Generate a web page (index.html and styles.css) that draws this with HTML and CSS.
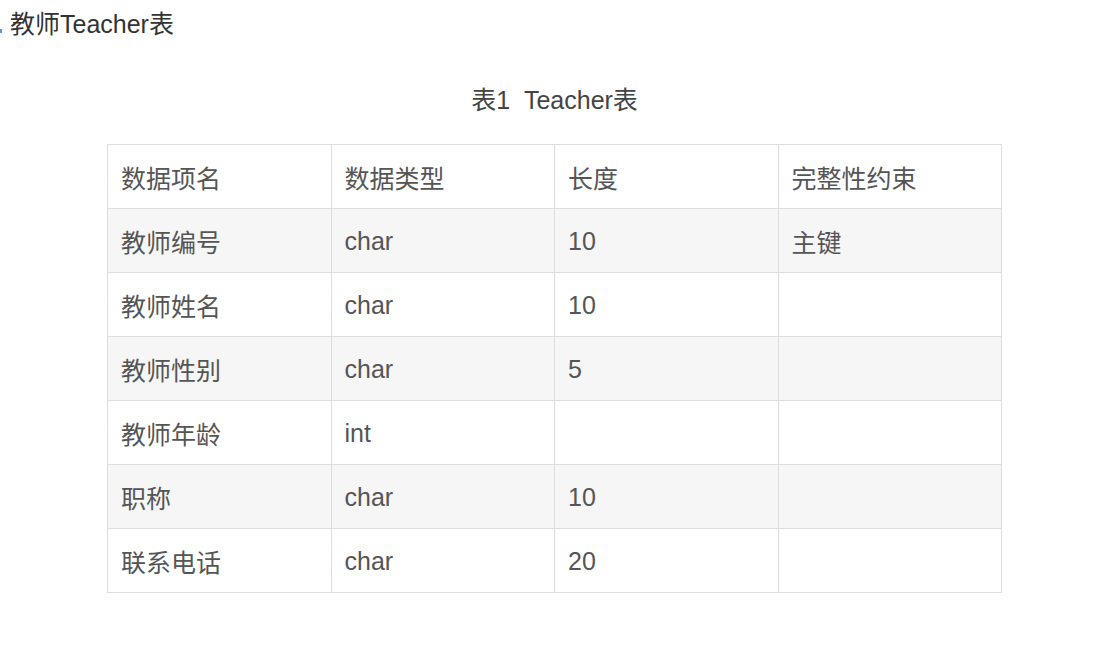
FILE: index.html
```html
<!DOCTYPE html>
<html lang="zh-CN">
<head>
<meta charset="utf-8">
<title>教师Teacher表</title>
<link rel="stylesheet" href="styles.css">
</head>
<body>
<h3 class="title"><span class="mark"></span>教师Teacher表</h3>
<div class="wrap">
<table class="tbl">
<caption>表1&nbsp;&nbsp;Teacher表</caption>
<tbody>
<tr><td>数据项名</td><td>数据类型</td><td>长度</td><td>完整性约束</td></tr>
<tr><td>教师编号</td><td>char</td><td>10</td><td>主键</td></tr>
<tr><td>教师姓名</td><td>char</td><td>10</td><td></td></tr>
<tr><td>教师性别</td><td>char</td><td>5</td><td></td></tr>
<tr><td>教师年龄</td><td>int</td><td></td><td></td></tr>
<tr><td>职称</td><td>char</td><td>10</td><td></td></tr>
<tr><td>联系电话</td><td>char</td><td>20</td><td></td></tr>
</tbody>
</table>
</div>
</body>
</html>
```
FILE: styles.css
```css
html, body {
  margin: 0;
  padding: 0;
  background: #fff;
}
body {
  font-family: "Liberation Sans", "Noto Sans CJK SC", sans-serif;
  color: #333;
}
.title {
  position: relative;
  margin: 0;
  padding: 6px 0 0 10px;
  font-size: 25px;
  font-weight: normal;
  line-height: 36px;
  color: #333;
}
.mark {
  position: absolute;
  left: 0;
  top: 29px;
  width: 2px;
  height: 4px;
  background: #4a9fe0;
}
.wrap {
  padding: 0 0 0 107px;
}
.tbl {
  width: 895px;
  border-collapse: collapse;
  font-size: 25px;
  color: #555;
}
.tbl caption {
  font-size: 25px;
  color: #444;
  line-height: 36px;
  padding: 40px 0 26px;
  text-align: center;
}
.tbl td {
  width: 25%;
  height: 64px;
  padding: 1px 13px 0;
  border: 1px solid #ddd;
  vertical-align: middle;
  box-sizing: border-box;
}
.tbl tr:nth-child(even) td {
  background: #f6f6f6;
}
```
